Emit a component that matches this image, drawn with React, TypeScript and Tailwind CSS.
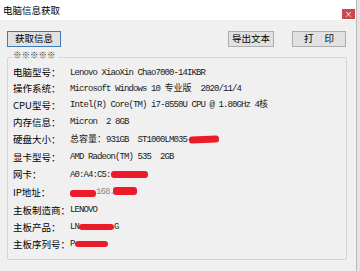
import type { ReactNode } from "react";

const cjk = "font-['Noto_Sans_CJK_SC',sans-serif]";

// CJK text inside a mono value keeps its full cell width
const C = ({ children }: { children: ReactNode }) => (
  <span className="tracking-normal">{children}</span>
);

const rows: { label: string; h: string; value: ReactNode }[] = [
  { label: "电脑型号：", h: "h-[16px]", value: "Lenovo XiaoXin Chao7000-14IKBR" },
  {
    label: "操作系统：",
    h: "h-[16px]",
    value: (
      <>
        Microsoft Windows 10 <C>专业版</C>  2020/11/4
      </>
    ),
  },
  {
    label: "CPU型号：",
    h: "h-[17px]",
    value: (
      <>
        Intel(R) Core(TM) i7-8550U CPU @ 1.80GHz 4<C>核</C>
      </>
    ),
  },
  { label: "内存信息：", h: "h-[17px]", value: "Micron  2 8GB" },
  {
    label: "硬盘大小：",
    h: "h-[18px]",
    value: (
      <>
        <C>总容量：</C>931GB  ST1000LM035-
        <span className="-ml-[3px] inline-block h-[7px] w-[30px] -rotate-2 rounded-[3px] bg-[#ec1b2a] align-middle" />
      </>
    ),
  },
  { label: "显卡型号：", h: "h-[17px]", value: "AMD Radeon(TM) 535  2GB" },
  {
    label: "网卡：",
    h: "h-[18px]",
    value: (
      <>
        A0:A4:C5:
        <span className="inline-block h-[7px] w-[37px] rounded-[3px] bg-[#ec1b2a] align-middle" />
      </>
    ),
  },
  {
    label: "IP地址：",
    h: "h-[18px]",
    value: (
      <>
        <span className="inline-block h-[7px] w-[26px] translate-y-[1px] rounded-[3px] bg-[#ec1b2a] align-middle" />
        <span className="text-[#8a8a8a]">168.</span>
        <span className="-ml-[1px] inline-block h-[8px] w-[24px] -translate-y-[1px] rounded-[3px] bg-[#ec1b2a] align-middle" />
      </>
    ),
  },
  { label: "主板制造商：", h: "h-[17px]", value: "LENOVO" },
  {
    label: "主板产品：",
    h: "h-[17px]",
    value: (
      <>
        LN
        <span className="inline-block h-[6px] w-[35px] rounded-[3px] bg-[#ec1b2a] align-middle" />
        G
      </>
    ),
  },
  {
    label: "主板序列号：",
    h: "h-[17px]",
    value: (
      <>
        P
        <span className="inline-block h-[6px] w-[33px] rounded-[3px] bg-[#ec1b2a] align-middle" />
      </>
    ),
  },
];

export default function App() {
  return (
    <div className={`flex h-[271px] w-[360px] overflow-hidden bg-[#f0f0f0] text-black ${cjk}`}>
      <div className="flex w-[356px] flex-col">
        {/* title bar */}
        <div className="flex h-[20px] shrink-0 bg-white">
          <span className="ml-[3px] self-center pt-[2px] text-[9.5px] leading-none">
            电脑信息获取
          </span>
          <div className="ml-auto mr-[1px] mt-[9px] flex h-[10px] w-[13px] items-center justify-center bg-[#c9474d] text-[8px] leading-none text-white">
            ×
          </div>
        </div>

        <div className="flex flex-1 flex-col pl-[7px] pr-[9px] pt-[11px]">
          {/* toolbar */}
          <div className="flex h-[16px] text-[9.5px] leading-none">
            <button className="flex w-[54px] items-center justify-center border border-[#3d7bbb] bg-[#e1e1e1]">
              获取信息
            </button>
            <button className="ml-auto flex w-[46px] items-center justify-center border border-[#adadad] bg-[#e1e1e1]">
              导出文本
            </button>
            <button className="ml-[18px] mr-[1px] flex w-[54px] items-center justify-center gap-[11px] border border-[#adadad] bg-[#e1e1e1]">
              <span>打</span>
              <span>印</span>
            </button>
          </div>

          {/* group box */}
          <div className="relative mt-[10px] h-[203px] w-[340px] rounded-[2px] border border-[#d5d5d5] pl-[5px] pt-[7px]">
            <span className="absolute left-[5px] top-[-8px] bg-[#f0f0f0] pr-[2px] text-[8.5px] leading-[9px] text-[#333]">
              ※※※※※
            </span>
            {rows.map((r) => (
              <div key={r.label} className={`flex items-center ${r.h}`}>
                <span className="w-[57px] shrink-0 text-[9.5px] leading-none">{r.label}</span>
                <span className="whitespace-pre font-['Liberation_Mono','Noto_Sans_CJK_SC',monospace] text-[9px] leading-none tracking-[-0.9px] text-[#1a1a1a]">
                  {r.value}
                </span>
              </div>
            ))}
          </div>
        </div>
      </div>
      {/* window edge */}
      <div className="w-[4px] border-l border-[#b9b9b9] bg-[#e4e4e4]" />
    </div>
  );
}
